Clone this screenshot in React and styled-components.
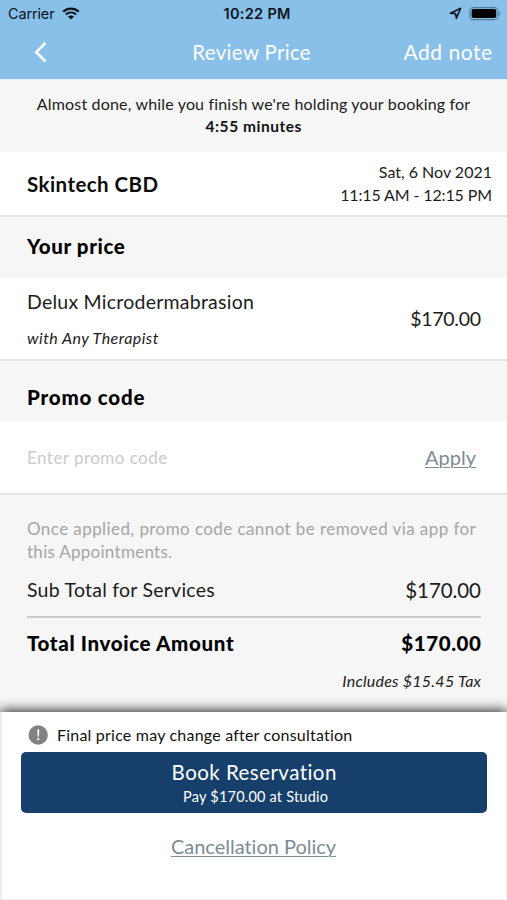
import React from 'react';
import styled, { createGlobalStyle } from 'styled-components';

const GlobalStyle = createGlobalStyle`
  *, *::before, *::after { box-sizing: border-box; }
  body { margin: 0; background: #f6f6f6; }
`;

const Screen = styled.main`
  display: flex;
  flex-direction: column;
  width: 507px;
  height: 900px;
  overflow: hidden;
  background: #f6f6f6;
  color: #1c1c1c;
  font-family: Lato, 'Open Sans', sans-serif;
`;

const Text = styled.span`
  display: block;
  white-space: nowrap;
  font-size: ${(p) => p.$size}px;
  font-weight: ${(p) => p.$weight || 400};
  font-style: ${(p) => (p.$italic ? 'italic' : 'normal')};
  line-height: ${(p) => p.$line || 24}px;
  letter-spacing: ${(p) => p.$track || 0}px;
  margin-right: ${(p) => -(p.$track || 0)}px;
  color: ${(p) => p.$color || 'inherit'};
`;

const Header = styled.header`
  flex: none;
  height: 79px;
  background: #89c0e9;
`;

const StatusBar = styled.div`
  display: grid;
  grid-template-columns: 1fr auto 1fr;
  align-items: center;
  height: 27px;
  padding: 0 6px 0 8px;
  color: #0b141b;
  font-family: Inter, sans-serif;
`;

const StatusGroup = styled.div`
  display: flex;
  align-items: center;
  justify-content: ${(p) => (p.$end ? 'flex-end' : 'flex-start')};
  gap: 7px;
`;

const Clock = styled.div`
  margin-left: 5px;
`;

const NavBar = styled.nav`
  display: grid;
  grid-template-columns: 1fr auto 1fr;
  align-items: center;
  height: 49px;
  padding: 0 15px 0 33px;
  color: #fff;
`;

const IconButton = styled.button`
  display: flex;
  justify-self: start;
  padding: 0;
  border: 0;
  background: none;
  color: inherit;
`;

const NavAction = styled.button`
  justify-self: end;
  padding: 0;
  border: 0;
  background: none;
  color: inherit;
  font-family: inherit;
`;

const NavTitle = styled.div`
  margin: 0 10px 0 -12px;
`;

const HoldNotice = styled.section`
  flex: none;
  display: flex;
  flex-direction: column;
  align-items: center;
  height: 73px;
  padding-top: 13px;
  border-top: 1px solid #e8f1fb;
`;

const Card = styled.section`
  flex: none;
  display: flex;
  align-items: center;
  justify-content: space-between;
  height: ${(p) => p.$height}px;
  padding: 0 ${(p) => p.$right}px 0 27px;
  background: #fff;
  border-bottom: 2px solid #e5e5e5;
`;

const SectionHeading = styled.h2`
  flex: none;
  display: flex;
  align-items: center;
  height: ${(p) => p.$height}px;
  margin: 0;
  padding: ${(p) => p.$top || 0}px 27px ${(p) => p.$bottom || 0}px;
  color: #000;
`;

const Stack = styled.div`
  display: flex;
  flex-direction: column;
  align-items: ${(p) => (p.$end ? 'flex-end' : 'flex-start')};
  gap: ${(p) => p.$gap || 0}px;
`;

const Schedule = styled(Stack)`
  padding-bottom: 2px;
`;

const ServiceDetails = styled(Stack)`
  padding-top: 2px;
`;

const PromoField = styled.div`
  padding-top: 1px;
`;

const Link = styled.a`
  display: block;
  white-space: nowrap;
  color: #7b8c93;
  font-size: 20px;
  line-height: 24px;
  letter-spacing: ${(p) => p.$track}px;
  text-decoration: underline;
  text-decoration-thickness: 1.3px;
  text-underline-offset: 2px;
`;

const Summary = styled.section`
  flex: 1;
  padding: 22px 26px 0 27px;
`;

const SummaryRow = styled.div`
  display: flex;
  align-items: center;
  justify-content: space-between;
  height: ${(p) => p.$height}px;
  padding-bottom: ${(p) => (p.$ruled ? 0 : 1)}px;
  border-bottom: ${(p) => (p.$ruled ? '2px solid #cbcbcb' : '0')};
`;

const TaxRow = styled.div`
  display: flex;
  justify-content: flex-end;
`;

const Footer = styled.footer`
  position: relative;
  flex: none;
  display: flex;
  flex-direction: column;
  height: 188px;
  padding: 10px 19px 0;
  background: #fff;
  border: solid #ececec;
  border-width: 0 1px 1px 2px;
  box-shadow: 0 -2px 11px 0 rgba(0, 0, 0, 0.8);
  clip-path: inset(-14px 0 0 0);
`;

const Disclaimer = styled.div`
  display: flex;
  align-items: center;
  gap: 9px;
  height: 25px;
  padding-left: 7px;
  color: #111;
`;

const BookButton = styled.button`
  display: flex;
  flex-direction: column;
  align-items: center;
  height: 61px;
  margin: 5px 0 0;
  padding: 8px 0 0;
  border: 0;
  border-radius: 5px;
  background: #163f6b;
  color: #fff;
  font-family: inherit;
`;

const PaymentNote = styled.div`
  padding: 1px 0 0 3px;
`;

const PolicyRow = styled.div`
  display: flex;
  justify-content: center;
  margin: 21px 1px 0 0;
`;

function WifiIcon() {
  return (
    <svg width="18" height="14" viewBox="0 0 18 14" fill="none">
      <path d="M1.2 4.6C5.7 .5 12.3 .5 16.8 4.6" stroke="currentColor" strokeWidth="2.3" />
      <path d="M3.9 7.5C6.9 4.8 11.1 4.8 14.1 7.5" stroke="currentColor" strokeWidth="2.1" />
      <path d="M9 12.5 5.9 9.5C7.7 8 10.3 8 12.1 9.5Z" fill="currentColor" />
    </svg>
  );
}

function LocationIcon() {
  return (
    <svg width="13" height="13" viewBox="0 0 13 13" fill="none">
      <path d="M11.6 1.3 7.4 11.3 6.5 6.6 1.4 6.2Z" stroke="currentColor" strokeWidth="1.6" strokeLinejoin="round" />
    </svg>
  );
}

function BatteryIcon() {
  return (
    <svg width="32" height="14" viewBox="0 0 32 14" fill="none">
      <rect x="0.9" y="0.6" width="28" height="12" rx="3.6" stroke="#527995" strokeWidth="1.1" />
      <rect x="2.6" y="2.1" width="24.6" height="9" rx="2" fill="#000" />
      <path d="M30.2 4.4v4.4c1.6-.7 1.6-3.7 0-4.4Z" fill="#527995" />
    </svg>
  );
}

function BackIcon() {
  return (
    <svg width="16" height="22" viewBox="0 0 16 22" fill="none">
      <path d="M12.4 1.9 3.3 11.2l9.1 9.3" stroke="currentColor" strokeWidth="2.6" />
    </svg>
  );
}

function AlertIcon() {
  return (
    <svg width="20" height="20" viewBox="0 0 20 20">
      <circle cx="10.2" cy="10" r="9.7" fill="#828282" />
      <path d="M9.3 4.6h2l-.4 7.1H9.7Z" fill="#fff" />
      <circle cx="10.3" cy="14.2" r="1.15" fill="#fff" />
    </svg>
  );
}

export default function App() {
  return (
    <Screen>
      <GlobalStyle />
      <Header>
        <StatusBar>
          <StatusGroup>
            <Text $size={14.5} $track={-0.15}>Carrier</Text>
            <WifiIcon />
          </StatusGroup>
          <Clock><Text $size={14.5} $weight={600} $track={0.3}>10:22 PM</Text></Clock>
          <StatusGroup $end>
            <LocationIcon />
            <BatteryIcon />
          </StatusGroup>
        </StatusBar>
        <NavBar>
          <IconButton aria-label="Back"><BackIcon /></IconButton>
          <NavTitle><Text $size={20.5} $track={0.32}>Review Price</Text></NavTitle>
          <NavAction><Text $size={21} $track={0.5}>Add note</Text></NavAction>
        </NavBar>
      </Header>

      <HoldNotice>
        <Text $size={16} $line={21.5} $track={0.17}>
          Almost done, while you finish we're holding your booking for
        </Text>
        <Text $size={15.5} $line={22.5} $weight={700} $track={0.54} $color="#111">4:55 minutes</Text>
      </HoldNotice>

      <Card $height={65} $right={15}>
        <Text $size={20.5} $weight={700} $track={0.43} $color="#0c0c0c">Skintech CBD</Text>
        <Schedule $end>
          <Text $size={16} $line={23}>Sat, 6 Nov 2021</Text>
          <Text $size={16} $line={23} $track={-0.13}>11:15 AM - 12:15 PM</Text>
        </Schedule>
      </Card>

      <SectionHeading $height={61} $bottom={3}>
        <Text $size={20.5} $weight={900} $track={0.62}>Your price</Text>
      </SectionHeading>
      <Card $height={83} $right={26}>
        <ServiceDetails $gap={12}>
          <Text $size={19.5} $track={0.24}>Delux Microdermabrasion</Text>
          <Text $size={16} $italic $track={0.44}>with Any Therapist</Text>
        </ServiceDetails>
        <Text $size={19.5} $track={-0.27}>$170.00</Text>
      </Card>

      <SectionHeading $height={60} $top={12}>
        <Text $size={20.5} $weight={900} $track={0.8}>Promo code</Text>
      </SectionHeading>
      <Card $height={74} $right={31}>
        <PromoField><Text $size={17} $track={0.46} $color="#cacaca">Enter promo code</Text></PromoField>
        <Link $track={0}>Apply</Link>
      </Card>

      <Summary>
        <Text $size={17} $line={23} $track={0.42} $color="#a5a5a5">
          Once applied, promo code cannot be removed via app for
        </Text>
        <Text $size={17} $line={23} $track={0.28} $color="#a5a5a5">this Appointments.</Text>
        <SummaryRow $height={55} $ruled>
          <Text $size={19.5} $track={0.24}>Sub Total for Services</Text>
          <Text $size={20.5} $track={-0.08}>$170.00</Text>
        </SummaryRow>
        <SummaryRow $height={51}>
          <Text $size={20.5} $weight={900} $track={0.65} $color="#000">Total Invoice Amount</Text>
          <Text $size={20.5} $weight={900} $track={0.6} $color="#000">$170.00</Text>
        </SummaryRow>
        <TaxRow>
          <Text $size={16} $italic $track={0.25}>Includes $15.45 Tax</Text>
        </TaxRow>
      </Summary>

      <Footer>
        <Disclaimer>
          <AlertIcon />
          <Text $size={16} $track={0.21}>Final price may change after consultation</Text>
        </Disclaimer>
        <BookButton>
          <Text $size={20.5} $track={0.46}>Book Reservation</Text>
          <PaymentNote><Text $size={14.5} $track={0.21}>Pay $170.00 at Studio</Text></PaymentNote>
        </BookButton>
        <PolicyRow>
          <Link $track={-0.02}>Cancellation Policy</Link>
        </PolicyRow>
      </Footer>
    </Screen>
  );
}
